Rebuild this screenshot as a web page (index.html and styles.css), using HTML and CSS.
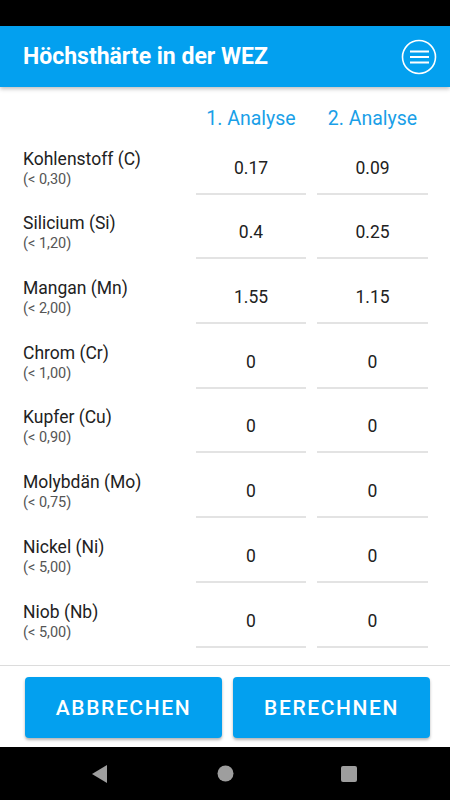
FILE: index.html
```html
<!DOCTYPE html>
<html lang="de">
<head>
    <meta charset="UTF-8">
    <meta name="viewport" content="width=device-width, initial-scale=1.0">
    <title>Höchsthärte in der WEZ</title>
    <link rel="stylesheet" href="styles.css">
</head>
<body>
    <div class="statusbar"></div>

    <header class="appbar">
        <h1>Höchsthärte in der WEZ</h1>
        <button class="menu-btn" aria-label="Menü">
            <svg width="36" height="36" viewBox="0 0 36 36">
                <circle cx="18" cy="18" r="16.5" fill="none" stroke="#fff" stroke-width="1.6"/>
                <path d="M9 12.5h19M9 18h19M9 23.5h19" stroke="#fff" stroke-width="1.8"/>
            </svg>
        </button>
    </header>

    <main class="content">
        <div class="colhead">
            <span></span>
            <span>1. Analyse</span>
            <span>2. Analyse</span>
        </div>

        <div class="row">
            <div class="element">Kohlenstoff (C)<small>(&lt; 0,30)</small></div>
            <input type="text" value="0.17">
            <input type="text" value="0.09">
        </div>
        <div class="row">
            <div class="element">Silicium (Si)<small>(&lt; 1,20)</small></div>
            <input type="text" value="0.4">
            <input type="text" value="0.25">
        </div>
        <div class="row">
            <div class="element">Mangan (Mn)<small>(&lt; 2,00)</small></div>
            <input type="text" value="1.55">
            <input type="text" value="1.15">
        </div>
        <div class="row">
            <div class="element">Chrom (Cr)<small>(&lt; 1,00)</small></div>
            <input type="text" value="0">
            <input type="text" value="0">
        </div>
        <div class="row">
            <div class="element">Kupfer (Cu)<small>(&lt; 0,90)</small></div>
            <input type="text" value="0">
            <input type="text" value="0">
        </div>
        <div class="row">
            <div class="element">Molybdän (Mo)<small>(&lt; 0,75)</small></div>
            <input type="text" value="0">
            <input type="text" value="0">
        </div>
        <div class="row">
            <div class="element">Nickel (Ni)<small>(&lt; 5,00)</small></div>
            <input type="text" value="0">
            <input type="text" value="0">
        </div>
        <div class="row">
            <div class="element">Niob (Nb)<small>(&lt; 5,00)</small></div>
            <input type="text" value="0">
            <input type="text" value="0">
        </div>
    </main>

    <footer class="actions">
        <button class="action">Abbrechen</button>
        <button class="action">Berechnen</button>
    </footer>

    <nav class="navbar">
        <svg width="16" height="18" viewBox="0 0 16 18"><path d="M15 0v18L0 9z" fill="#9e9e9e"/></svg>
        <svg width="17" height="17" viewBox="0 0 17 17"><circle cx="8.5" cy="8.5" r="8" fill="#9e9e9e"/></svg>
        <svg width="16" height="16" viewBox="0 0 16 16"><rect width="16" height="16" rx="2" fill="#9e9e9e"/></svg>
    </nav>
</body>
</html>
```

FILE: styles.css
```css
body {
    margin: 0;
    width: 450px;
    height: 800px;
    display: flex;
    flex-direction: column;
    font-family: Roboto, "Liberation Sans", sans-serif;
    background-color: #fff;
    color: #212121;
    overflow: hidden;
}

.statusbar {
    height: 26px;
    background-color: #000;
}

.appbar {
    height: 61px;
    display: flex;
    align-items: center;
    justify-content: space-between;
    padding: 0 13px 0 23px;
    background-color: #03a0ef;
    box-shadow: 0 2px 4px rgba(0, 0, 0, 0.25);
    position: relative;
    z-index: 1;
}

.appbar h1 {
    margin: 0;
    font-size: 23px;
    font-weight: 700;
    color: #fff;
}

.menu-btn {
    width: 36px;
    height: 36px;
    padding: 0;
    border: none;
    background: none;
}

.menu-btn svg {
    display: block;
}

.content {
    height: 578px;
    overflow: hidden;
    padding: 0 22px 0 23px;
}

.colhead,
.row {
    display: grid;
    grid-template-columns: 162px 110px 111px;
    column-gap: 11px;
}

.colhead {
    height: 22px;
    padding-top: 21px;
    font-size: 19.5px;
    line-height: 21px;
    color: #1a9fe8;
    text-align: center;
}

.row {
    height: 52px;
    padding-top: 12.7px;
}

.element {
    display: flex;
    flex-direction: column;
    justify-content: center;
    gap: 1px;
    font-size: 17.5px;
    line-height: 21px;
    color: #222;
    white-space: nowrap;
}

.element small {
    font-size: 14.5px;
    line-height: 18px;
    color: #555;
}

.row input {
    width: 100%;
    height: 52px;
    box-sizing: border-box;
    margin: 0;
    padding: 0;
    border: none;
    border-bottom: 2px solid #e3e3e3;
    background: none;
    font-family: inherit;
    font-size: 17.5px;
    color: #212121;
    text-align: center;
    outline: none;
}

.actions {
    display: flex;
    gap: 11px;
    padding: 11px 20px 9px 25px;
    height: 61px;
    border-top: 1px solid #dcdcdc;
}

.action {
    flex: 1;
    border: none;
    border-radius: 4px;
    background-color: #03a0ef;
    color: #fff;
    font-family: inherit;
    font-size: 21px;
    font-weight: 500;
    letter-spacing: 1.6px;
    text-transform: uppercase;
    box-shadow: 0 2px 3px rgba(0, 0, 0, 0.3);
    cursor: pointer;
}

.navbar {
    flex: 1;
    display: flex;
    align-items: center;
    background-color: #000;
}

.navbar svg:nth-child(1) {
    margin-left: 92px;
}

.navbar svg:nth-child(2) {
    margin-left: 109px;
}

.navbar svg:nth-child(3) {
    margin-left: 107px;
}
```
